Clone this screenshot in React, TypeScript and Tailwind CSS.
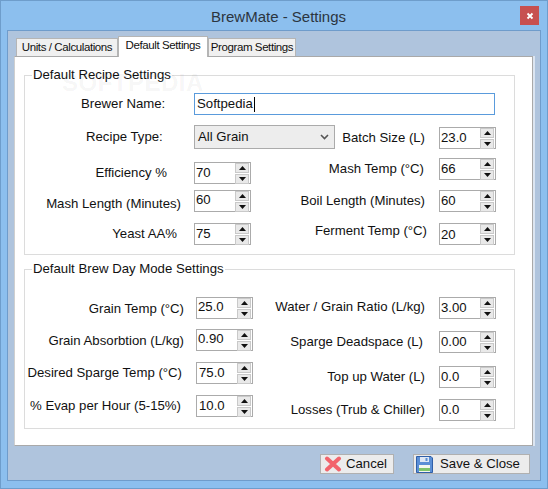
const font = { fontFamily: '"Liberation Sans", Arial, sans-serif' };

function Arrow({ up }: { up?: boolean }) {
  return (
    <div className="flex h-[10px] w-[14px] items-center justify-center border border-[#c9c9c9] bg-[#e9e9e9]">
      <svg width="7" height="4" viewBox="0 0 7 4">
        <path d={up ? 'M3.5 0 7 4H0Z' : 'M0 0H7L3.5 4Z'} fill="#111" />
      </svg>
    </div>
  );
}

function Spin({ value, textClass = '' }: { value: string; textClass?: string }) {
  return (
    <div className="flex h-[22px] w-[57px] shrink-0 items-center justify-between border border-[#ababab] bg-white pl-[1px] pr-[1px]">
      <span className={`text-[13.2px] leading-none text-[#111] ${textClass}`}>{value}</span>
      <div className="flex flex-col gap-px">
        <Arrow up />
        <Arrow />
      </div>
    </div>
  );
}

interface FieldProps {
  label: string;
  value: string;
  className?: string;
  labelClass?: string;
  textClass?: string;
}

function Field({ label, value, className = '', labelClass = '', textClass = '' }: FieldProps) {
  return (
    <div className={`flex h-[22px] items-center justify-end ${className}`}>
      <span className={`whitespace-nowrap text-[13.2px] leading-none text-[#111] ${labelClass}`}>{label}</span>
      <Spin value={value} textClass={textClass} />
    </div>
  );
}

function Group({ title, className, children }: { title: string; className: string; children: React.ReactNode }) {
  return (
    <div className={`relative border border-[#dcdcdc] ${className}`}>
      <span className="absolute left-[7px] top-[-8px] bg-white px-[1px] text-[13.2px] leading-none text-[#111]">{title}</span>
      {children}
    </div>
  );
}

function CancelIcon() {
  return (
    <svg width="18" height="16" viewBox="0 0 18 16">
      <path d="M3 2.5 15 13.5M15 2.5 3 13.5" stroke="#f2646c" strokeWidth="4" strokeLinecap="round" />
    </svg>
  );
}

function SaveIcon() {
  return (
    <svg width="17" height="17" viewBox="0 0 17 17">
      <path d="M.5.5H15L16.5 2V16.5H.5Z" fill="#5b8fd6" stroke="#2f5fa8" />
      <rect x="4" y="1" width="9" height="5" fill="#dfe8f5" />
      <rect x="9.5" y="2" width="2" height="3" fill="#5b8fd6" />
      <rect x="3" y="9" width="11" height="7" fill="#f4f7ef" />
      <rect x="3" y="12" width="11" height="3" fill="#7ec46a" />
    </svg>
  );
}

export default function App() {
  return (
    <div style={font} className="relative flex h-[489px] w-[548px] flex-col overflow-hidden border border-[#6e9dcb] bg-[#8cbfee]">
      <div className="relative flex h-[29px] shrink-0 items-center justify-center">
        <span className="ml-[9px] mt-[2px] text-[15px] leading-none text-[#2b3540]">BrewMate - Settings</span>
        <div className="absolute right-[8px] top-[5px] flex h-[19px] w-[19px] items-center justify-center bg-[#c75050]">
          <svg width="8" height="8" viewBox="0 0 8 8">
            <path d="M1.5 1.5 6.5 6.5M6.5 1.5 1.5 6.5" stroke="#fff" strokeWidth="1.8" />
          </svg>
        </div>
      </div>

      <div className="mx-[6px] flex h-[451px] flex-col border border-[#6f9ccb] bg-[#afc4dd] pl-[6px] pr-[5px]">
        {/* tabs */}
        <div className="flex h-[25px] items-end pl-[2px]">
          <div className="flex h-[18px] w-[102px] items-center justify-center whitespace-nowrap border border-b-0 border-[#b5b5b5] bg-[#f0f0f0] text-[11.5px] leading-none tracking-[-0.4px] text-[#111]">
            Units / Calculations
          </div>
          <div className="z-10 mb-[-1px] flex h-[21px] w-[90px] items-center justify-center whitespace-nowrap border border-b-0 border-[#b5b5b5] bg-white pb-[3px] text-[11.5px] leading-none tracking-[-0.4px] text-[#111]">
            Default Settings
          </div>
          <div className="flex h-[18px] w-[88px] items-center justify-center whitespace-nowrap border border-b-0 border-[#b5b5b5] bg-[#f0f0f0] text-[11.5px] leading-none tracking-[-0.4px] text-[#111]">
            Program Settings
          </div>
        </div>

        <div className="h-[390px] border-r-[2px] border-[#dbe5f1]">
          <div className="relative h-full border border-l-[#cfcfcf] border-[#a9a9a9] bg-white pl-[9px] pr-[17px] pt-[18px]">
            <Group title="Default Recipe Settings" className="h-[180px] pt-[17px]">
              <div className="flex h-[22px] items-center">
                <span className="ml-[56px] w-[113px] shrink-0 text-[13.2px] leading-none text-[#111]">Brewer Name:</span>
                <div className="flex h-[22px] w-[301px] items-center border border-[#5a9bdc] pl-[2px] text-[13.2px] leading-none text-[#111]">
                  Softpedia
                  <span className="ml-px h-[15px] w-px bg-black" />
                </div>
              </div>

              <div className="flex justify-between pr-[18px] pt-[10px]">
                <div className="w-[226px]">
                  <div className="flex h-[24px] items-center">
                    <span className="ml-[61px] w-[108px] shrink-0 whitespace-nowrap text-[13.2px] leading-none text-[#111]">Recipe Type:</span>
                    <div className="flex h-[24px] w-[141px] shrink-0 items-center justify-between border border-[#ababab] bg-[#ededed] pl-[3px] pr-[5px] text-[13.2px] leading-none text-[#111]">
                      All Grain
                      <svg width="9" height="6" viewBox="0 0 9 6">
                        <path d="M1 1 4.5 4.5 8 1" fill="none" stroke="#555" strokeWidth="1.6" />
                      </svg>
                    </div>
                  </div>
                  <Field label="Efficiency %" value="70" className="mt-[13px]" labelClass="mb-[1px] mr-[27px]" />
                  <Field label="Mash Length (Minutes)" value="60" className="mt-[6px]" labelClass="mr-[13px] mt-[6px]" textClass="mb-[2px]" />
                  <Field label="Yeast AA%" value="75" className="mt-[11px]" labelClass="mb-[1px] mr-[17px]" />
                </div>
                <div className="w-[186px] pt-[2px]">
                  <Field label="Batch Size (L)" value="23.0" labelClass="mb-[1px] mr-[14px]" />
                  <Field label="Mash Temp (°C)" value="66" className="mt-[9px]" labelClass="mb-[1px] mr-[15px]" />
                  <Field label="Boil Length (Minutes)" value="60" className="mt-[10px]" labelClass="mb-[1px] mr-[14px]" />
                  <Field label="Ferment Temp (°C)" value="20" className="mt-[11px]" labelClass="mb-[6px] mr-[12px]" textClass="mt-[1px]" />
                </div>
              </div>
            </Group>

            <Group title="Default Brew Day Mode Settings" className="mt-[14px] h-[160px] pt-[27px]">
              <div className="flex justify-between pr-[18px]">
                <div className="w-[228px]">
                  <Field label="Grain Temp (°C)" value="25.0" labelClass="mt-[2px] mr-[12px]" textClass="mb-[2px]" />
                  <Field label="Grain Absorbtion (L/kg)" value="0.90" className="mt-[10px]" labelClass="mt-[2px] mr-[12px]" textClass="mb-[2px]" />
                  <Field label="Desired Sparge Temp (°C)" value="75.0" className="mt-[11px]" labelClass="mb-[1px] mr-[14px]" textClass="ml-[1px]" />
                  <Field label="% Evap per Hour (5-15%)" value="10.0" className="mt-[11px]" labelClass="mb-[1px] mr-[15px]" textClass="ml-[1px]" />
                </div>
                <div className="w-[230px]">
                  <Field label="Water / Grain Ratio (L/kg)" value="3.00" labelClass="mb-[2px] mr-[14px]" />
                  <Field label="Sparge Deadspace (L)" value="0.00" className="mt-[12px]" labelClass="mb-[1px] mr-[16px]" />
                  <Field label="Top up Water (L)" value="0.0" className="mt-[13px]" labelClass="mr-[14px]" />
                  <Field label="Losses (Trub & Chiller)" value="0.0" className="mt-[11px]" labelClass="mb-[1px] mr-[14px]" />
                </div>
              </div>
            </Group>

            {/* faint watermark over the first group */}
            <span className="pointer-events-none absolute left-[47px] top-[14px] text-[24px] font-bold leading-none tracking-[0.5px] text-[#0000000d]">SOFTPEDIA</span>
          </div>
        </div>

        <div className="flex items-start justify-end gap-[19px] pr-[5px] pt-[8px]">
          <div className="flex h-[20px] w-[74px] items-center border border-[#b0b0b0] bg-[#ececec] pl-[3px] text-[13.2px] leading-none text-[#111]">
            <CancelIcon />
            <span className="ml-[4px]">Cancel</span>
          </div>
          <div className="flex h-[20px] w-[117px] items-center border border-[#b0b0b0] bg-[#ececec] pl-[2px] text-[13.2px] leading-none text-[#111]">
            <SaveIcon />
            <span className="ml-[7px]">Save &amp; Close</span>
          </div>
        </div>
      </div>
    </div>
  );
}
